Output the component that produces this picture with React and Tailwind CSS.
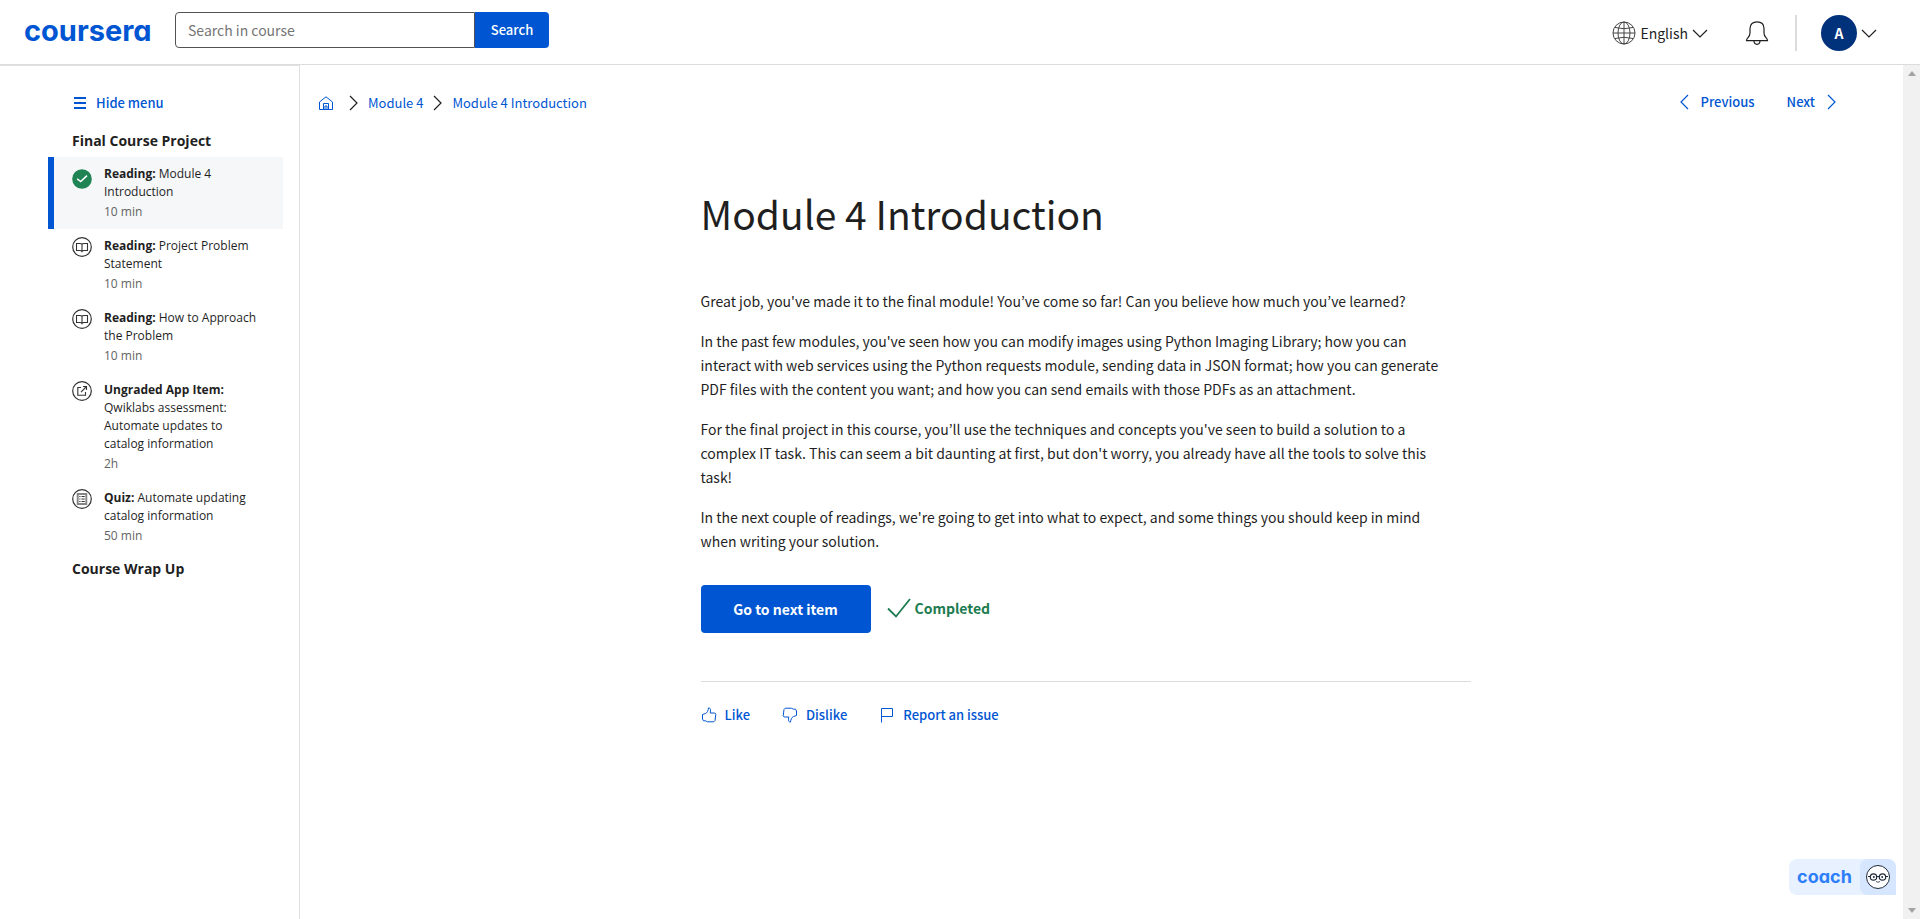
import React from "react";

function Chevron({ dir, className }) {
  const paths = {
    down: "M1 1 8 8 15 1",
    right: "M1 1 8 8 1 15",
    left: "M8 1 1 8 8 15",
  };
  const box = dir === "down" ? "0 0 16 9" : "0 0 9 16";
  return (
    <svg viewBox={box} className={className} fill="none" stroke="currentColor" strokeWidth="1.2" aria-hidden="true">
      <path d={paths[dir]} />
    </svg>
  );
}

function DoneIcon() {
  return (
    <svg viewBox="0 0 20 20" className="mt-1 size-5 shrink-0" aria-hidden="true">
      <circle cx="10" cy="10" r="9.8" fill="#1f8354" />
      <path d="M5.2 9.8 8.7 12.6 15 6.6" fill="none" stroke="#fff" strokeWidth="1.5" />
    </svg>
  );
}

function CircleIcon({ children }) {
  return (
    <svg viewBox="0 0 20 20" className="size-5 shrink-0" fill="none" stroke="#333" aria-hidden="true">
      <circle cx="10" cy="10" r="9.3" strokeWidth="1.2" />
      {children}
    </svg>
  );
}

const icons = {
  done: <DoneIcon />,
  book: (
    <CircleIcon>
      <path d="M10 7C9.400 6.500 8.800 6.500 8 6.500H4.500V13.500H8C9 13.500 9.600 13.800 10 14.600 10.400 13.800 11 13.500 12 13.500H15.500V6.500H12C11.200 6.500 10.600 6.500 10 7ZM10 7V14.600" strokeWidth="1.100" />
    </CircleIcon>
  ),
  app: (
    <CircleIcon>
      <path d="M9 6.500H5.800V14.300H13.500V11M9 11.200 14.500 5.500M11 5.500H14.500V9" strokeWidth="1.100" />
    </CircleIcon>
  ),
  quiz: (
    <CircleIcon>
      <path d="M5.700 5H14.300V15H5.700Z" stroke="#858585" strokeWidth="1.900" />
      <path d="M7.300 7.500H8.500M9.500 7.500H12.700M7.300 10H8.500M9.500 10H12.700M7.300 12.500H8.500M9.500 12.500H12.700" strokeWidth="1" />
    </CircleIcon>
  ),
};

const items = [
  { icon: "done", kind: "Reading:", name: "Module 4 Introduction", time: "10 min", active: true },
  { icon: "book", kind: "Reading:", name: "Project Problem Statement", time: "10 min" },
  { icon: "book", kind: "Reading:", name: "How to Approach the Problem", time: "10 min" },
  { icon: "app", kind: "Ungraded App Item:", name: "Qwiklabs assessment: Automate updates to catalog information", time: "2h" },
  { icon: "quiz", kind: "Quiz:", name: "Automate updating catalog information", time: "50 min" },
];

function Header() {
  return (
    <header className="flex h-[65px] shrink-0 items-start justify-between border-b border-[#dcdcdc] pl-6 pr-[43px]">
      <div className="flex items-start pt-3">
        <a href="#home" className="w-[151px] font-['Inter'] text-[29px] leading-[38px] font-bold text-[#0056d2] [font-feature-settings:'cv11']">coursera</a>
        <form className="flex h-9" onSubmit={(e) => e.preventDefault()}>
          <input
            type="text"
            aria-label="Search in course"
            placeholder="Search in course"
            className="w-[300px] rounded-l-[4px] border border-[#525252] px-3 text-[14px] placeholder:text-[#757575] outline-none"
          />
          <button type="submit" className="w-[74px] rounded-r-[4px] bg-[#0056d2] text-[13px] font-medium text-white">Search</button>
        </form>
      </div>
      <div className="flex items-center pt-[15px]">
        <button type="button" className="flex items-center text-[14px]">
          <svg viewBox="0 0 24 24" className="mr-1 size-6" fill="none" stroke="#444" strokeWidth="1" aria-hidden="true">
            <circle cx="12" cy="12" r="11" />
            <ellipse cx="12" cy="12" rx="6" ry="11" />
            <path d="M12 1V23M1 12H23M3 6.500Q12 9 21 6.500M3 17.500Q12 15 21 17.500" />
          </svg>
          English
          <Chevron dir="down" className="ml-1 h-[9px] w-4" />
        </button>
        <button type="button" aria-label="Notifications" className="ml-[37px]">
          <svg viewBox="0 0 24 24" className="size-6" fill="none" stroke="#1f1f1f" strokeWidth="1.200" aria-hidden="true">
            <path d="M1.500 19.600C1.500 16.500 5 16.500 5 12V7.500C5 3 8 .8 12 .8S19 3 19 7.500V12C19 16.500 22.500 16.500 22.500 19.600Z" />
            <path d="M9 19.800C9 22.200 10.300 23.300 12 23.300S15 22.200 15 19.800" />
          </svg>
        </button>
        <div className="ml-[26px] h-9 w-[2px] bg-[#dcdcdc]" />
        <button type="button" aria-label="Account menu" className="ml-6 flex items-center">
          <span className="flex size-9 items-center justify-center rounded-full bg-[#00317b] text-[14px] font-bold text-white">A</span>
          <Chevron dir="down" className="ml-1 h-[9px] w-4" />
        </button>
      </div>
    </header>
  );
}

function Sidebar() {
  return (
    <aside className="w-[300px] shrink-0 border-t border-r border-[#e1e1e1] pl-12 pr-4 pt-[27px]">
      <button type="button" className="ml-[26px] flex h-5 items-center gap-[10px] text-[13px] font-medium text-[#0056d2]">
        <svg viewBox="0 0 12 12" className="size-3" fill="currentColor" aria-hidden="true">
          <path d="M0 0H12V2H0ZM0 5H12V7H0ZM0 10H12V12H0Z" />
        </svg>
        Hide menu
      </button>
      <nav className="font-['Open_Sans',sans-serif]">
        <h2 className="mt-4 ml-6 h-7 text-[14px] leading-6 font-bold">Final Course Project</h2>
        <ul>
          {items.map((it) => (
            <li key={it.name}>
              <a
                href="#item"
                className={
                  it.active
                    ? "flex gap-3 border-l-6 border-[#0056d2] bg-[#f5f7f8] py-2 pl-[18px] pr-5"
                    : "flex gap-3 border-l-6 border-transparent py-2 pl-[18px] pr-5"
                }
              >
                {icons[it.icon]}
                <div className="text-[12px] leading-[18px]">
                  <p>
                    <strong className="font-bold">{it.kind}</strong> {it.name}
                  </p>
                  <p className="mt-0.5 text-[#636363]">{it.time}</p>
                </div>
              </a>
            </li>
          ))}
        </ul>
        <h2 className="mt-1 ml-6 text-[14px] leading-6 font-bold">Course Wrap Up</h2>
      </nav>
    </aside>
  );
}

function Content() {
  return (
    <main className="flex min-w-0 flex-1 flex-col">
      <div className="flex items-start justify-between pt-7 pl-[19px] pr-[67px] text-[13px] text-[#0056d2]">
        <nav aria-label="Breadcrumb" className="flex h-5 items-center">
          <a href="#home" aria-label="Home" className="mr-4">
            <svg viewBox="0 0 14 14" className="size-[14px]" fill="none" stroke="currentColor" strokeWidth="1" aria-hidden="true">
              <path d="M.5 6 7 .8 13.500 6V13.500H.5ZM4.500 13.500V7.500H9.500V13.500M6 13.500V10H8V13.500" />
            </svg>
          </a>
          <Chevron dir="right" className="mr-[10px] h-4 w-[9px] text-[#1f1f1f]" />
          <a href="#module" className="mr-[10px]">Module 4</a>
          <Chevron dir="right" className="mr-[10px] h-4 w-[9px] text-[#1f1f1f]" />
          <a href="#introduction">Module 4 Introduction</a>
        </nav>
        <div className="flex h-[18px] items-center gap-8 font-medium">
          <a href="#previous" className="flex items-center gap-3">
            <Chevron dir="left" className="h-4 w-[9px]" />
            Previous
          </a>
          <a href="#next" className="flex items-center gap-3">
            Next
            <Chevron dir="right" className="h-4 w-[9px]" />
          </a>
        </div>
      </div>
      <div className="pt-[70px] pr-8">
        <article className="mx-auto w-[770px] max-w-full">
          <h1 className="text-[39px] leading-[60px]">Module 4 Introduction</h1>
          <div className="mt-[46px] flex flex-col gap-4 pr-4 text-[14px] leading-6">
            <p>Great job, you've made it to the final module! You’ve come so far! Can you believe how much you’ve learned?</p>
            <p>In the past few modules, you've seen how you can modify images using Python Imaging Library; how you can interact with web services using the Python requests module, sending data in JSON format; how you can generate PDF files with the content you want; and how you can send emails with those PDFs as an attachment.</p>
            <p>For the final project in this course, you’ll use the techniques and concepts you've seen to build a solution to a complex IT task. This can seem a bit daunting at first, but don't worry, you already have all the tools to solve this task!</p>
            <p>In the next couple of readings, we're going to get into what to expect, and some things you should keep in mind when writing your solution.</p>
          </div>
          <div className="mt-8 flex items-center pb-12">
            <button type="button" className="h-12 min-w-[170px] rounded-[4px] bg-[#0056d2] px-4 text-[14px] font-bold text-white">Go to next item</button>
            <span className="ml-4 flex items-center gap-1 pb-0.5 text-[14px] font-bold text-[#1d7c50]">
              <svg viewBox="0 0 24 20" className="h-5 w-6" fill="none" stroke="currentColor" strokeWidth="1.800" aria-hidden="true">
                <path d="M1 10.500 9 18.500 23 1" />
              </svg>
              Completed
            </span>
          </div>
          <div className="flex gap-8 border-t border-[#dcdcdc] pt-[23px] text-[13px] leading-5 font-medium text-[#0056d2]">
            <button type="button" className="flex items-center gap-2">
              <ThumbIcon />
              Like
            </button>
            <button type="button" className="flex items-center gap-2">
              <ThumbIcon flipped />
              Dislike
            </button>
            <button type="button" className="flex items-center gap-2">
              <svg viewBox="0 0 16 16" className="size-4" fill="none" stroke="currentColor" strokeWidth="1" aria-hidden="true">
                <path d="M2.500 15.500V1.500H13.500V9.500H2.500" />
              </svg>
              Report an issue
            </button>
          </div>
        </article>
      </div>
    </main>
  );
}

function ThumbIcon({ flipped }) {
  return (
    <svg viewBox="0 0 16 16" className={flipped ? "size-4 rotate-180" : "size-4"} fill="none" stroke="currentColor" strokeWidth="1" aria-hidden="true">
      <path d="M1.500 7.500 4.500 6.500C6.500 5.500 7.200 3.500 7.500 1 9 .8 9.700 2 9.500 3.800L9.200 6H13.800L14.800 7.200 14 13.500 12.800 14.800H6.500L4.500 13.800H2.500L1.500 12Z" />
    </svg>
  );
}

function Coach() {
  return (
    <button type="button" aria-label="coach" className="absolute right-6 bottom-6 flex h-9 items-center rounded-l-[8px] rounded-tr-[8px] bg-[#e8f1ff]">
      <span className="w-[71px] text-center font-['Inter'] text-[18px] leading-9 font-bold text-[#2d7ff9] [font-feature-settings:'cv11']">coach</span>
      <span className="flex h-9 w-9 items-center justify-center rounded-l-[8px] rounded-tr-[8px] bg-[#d6e6ff]">
        <svg viewBox="0 0 24 24" className="size-6" fill="none" stroke="#1f2937" aria-hidden="true">
          <circle cx="12" cy="12" r="11.500" fill="#fff" strokeWidth="1" />
          <circle cx="7.500" cy="12" r="3.200" strokeWidth="1.200" />
          <circle cx="16.500" cy="12" r="3.200" strokeWidth="1.200" />
          <path d="M10.700 11.500H13.300M2 11.500H4.300M19.700 11.500H22" strokeWidth="1.200" />
          <path d="M10 16.500Q12 18 14 16.500" strokeWidth=".8" />
          <circle cx="7.800" cy="12" r=".6" fill="#1f2937" />
          <circle cx="16.200" cy="12" r=".6" fill="#1f2937" />
        </svg>
      </span>
    </button>
  );
}

export default function App() {
  return (
    <div className="relative flex h-screen flex-col bg-white font-['Noto_Sans_CJK_KR',sans-serif] text-[#1f1f1f]">
      <Header />
      <div className="flex min-h-0 flex-1">
        <Sidebar />
        <Content />
        <div className="flex w-[17px] shrink-0 flex-col items-center justify-between bg-[#f1f1f1] py-[6px]" aria-hidden="true">
          <svg viewBox="0 0 8 5" className="h-[5px] w-2" fill="#a3a3a3"><path d="M0 5 4 0 8 5Z" /></svg>
          <svg viewBox="0 0 8 5" className="h-[5px] w-2" fill="#a3a3a3"><path d="M0 0 4 5 8 0Z" /></svg>
        </div>
      </div>
      <Coach />
    </div>
  );
}
